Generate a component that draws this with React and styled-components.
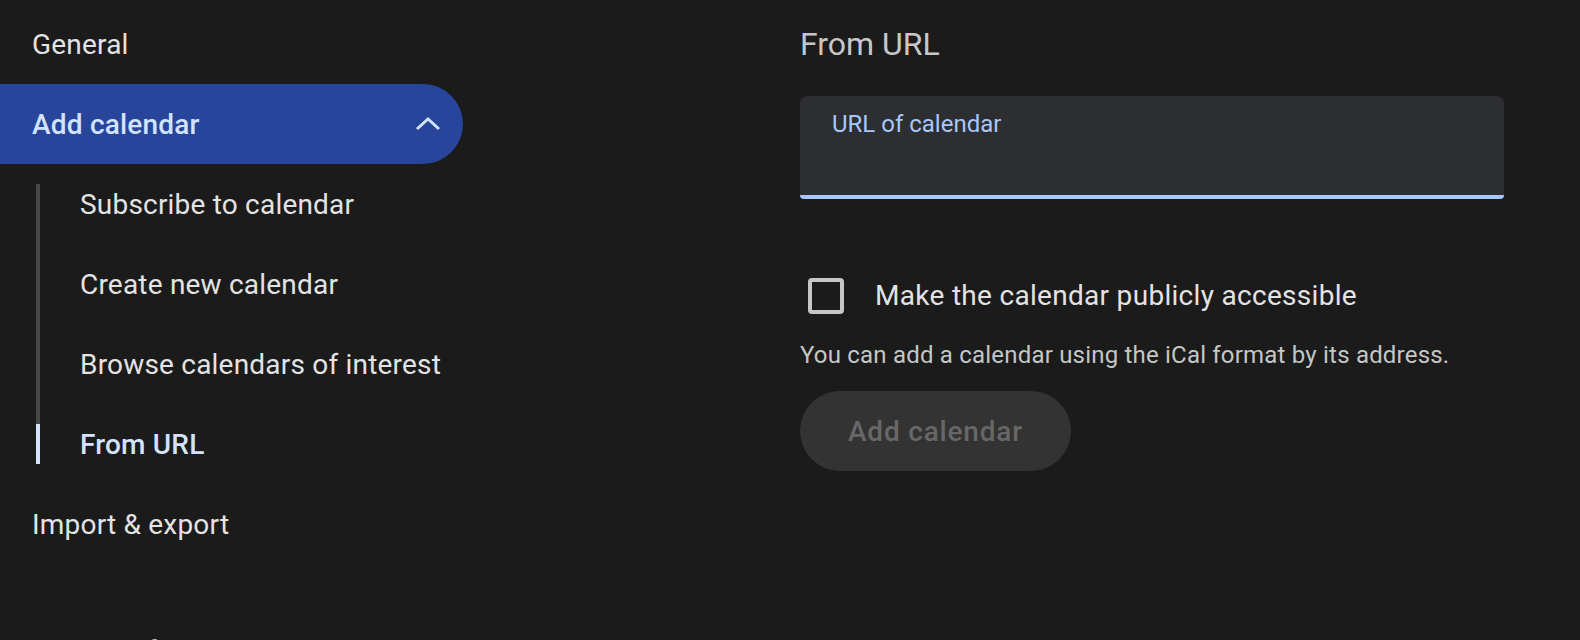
import styled, { createGlobalStyle } from "styled-components"

const GlobalStyle = createGlobalStyle`
  html, body {
    margin: 0;
    background: #1b1b1b;
    overflow: hidden;
  }
  body {
    font-family: Roboto, "Liberation Sans", sans-serif;
    -webkit-font-smoothing: antialiased;
  }
`

const subItems = [
    "Subscribe to calendar",
    "Create new calendar",
    "Browse calendars of interest",
    "From URL",
]

export default function App() {
    return (
        <>
        <GlobalStyle />
        <Page>
            <Nav>
                <NavItem>General</NavItem>
                <NavItem $open>
                    Add calendar
                    <Chevron viewBox="0 0 26 16">
                        <polyline points="2,13 13,3 24,13" />
                    </Chevron>
                </NavItem>
                <SubList>
                    {subItems.map((label) => (
                        <SubItem key={label} $active={label === "From URL"}>{label}</SubItem>
                    ))}
                </SubList>
                <NavItem>Import &amp; export</NavItem>
                <NavHeader>Settings for my calendars</NavHeader>
            </Nav>
            <Main>
                <Heading>From URL</Heading>
                <Field>
                    <FieldLabel>URL of calendar</FieldLabel>
                </Field>
                <CheckRow>
                    <Checkbox />
                    <CheckLabel>Make the calendar publicly accessible</CheckLabel>
                </CheckRow>
                <Helper>You can add a calendar using the iCal format by its address.</Helper>
                <AddButton disabled>Add calendar</AddButton>
            </Main>
        </Page>
        </>
    )
}

const Page = styled.div`
display: flex;
align-items: flex-start;
padding-top: 4px;
`;

const Nav = styled.nav`
width: 463px;
flex-shrink: 0;
display: flex;
flex-direction: column;
`;

const NavItem = styled.div`
height: 80px;
display: flex;
align-items: center;
justify-content: space-between;
padding: 0 22px 0 32px;
font-size: 28px;
letter-spacing: 0.2px;
color: ${(p) => (p.$open ? "#d3e3fd" : "#e3e3e3")};
font-weight: ${(p) => (p.$open ? 500 : 400)};
background: ${(p) => (p.$open ? "#26459b" : "transparent")};
border-radius: 0 40px 40px 0;
`;

const Chevron = styled.svg`
width: 26px;
height: 16px;
fill: none;
stroke: #d3e3fd;
stroke-width: 3;
`;

// grey rail down the left of the sub-menu
const SubList = styled.div`
position: relative;
display: flex;
flex-direction: column;
&::before {
    content: "";
    position: absolute;
    left: 36px;
    top: 20px;
    bottom: 20px;
    width: 4px;
    background: #444746;
}
`;

const SubItem = styled.div`
position: relative;
height: 80px;
display: flex;
align-items: center;
padding-left: 80px;
font-size: 28px;
letter-spacing: 0.2px;
color: ${(p) => (p.$active ? "#d3e3fd" : "#e3e3e3")};
font-weight: ${(p) => (p.$active ? 500 : 400)};
&::before {
    content: "";
    display: ${(p) => (p.$active ? "block" : "none")};
    position: absolute;
    left: 36px;
    top: 20px;
    width: 4px;
    height: 40px;
    background: #d3e3fd;
}
`;

const NavHeader = styled.div`
margin-top: 68px;
padding-left: 32px;
line-height: 40px;
font-size: 29px;
font-weight: 500;
color: #e3e3e3;
white-space: nowrap;
`;

const Main = styled.main`
margin-left: 337px;
width: 704px;
padding-top: 20px;
display: flex;
flex-direction: column;
align-items: flex-start;
`;

const Heading = styled.h1`
margin: 0;
font-size: 32px;
line-height: 40px;
font-weight: 400;
color: #c7c7c7;
`;

const Field = styled.div`
margin-top: 32px;
align-self: stretch;
height: 103px;
box-sizing: border-box;
padding: 16px 32px 0;
background: #2d2e31;
border-bottom: 4px solid #a8c7fa;
border-radius: 8px 8px 4px 4px;
`;

const FieldLabel = styled.div`
font-size: 24px;
line-height: 24px;
color: #a8c7fa;
`;

const CheckRow = styled.label`
margin-top: 79px;
margin-left: 8px;
display: flex;
align-items: center;
gap: 31px;
`;

const Checkbox = styled.span`
width: 36px;
height: 36px;
box-sizing: border-box;
border: 4px solid #c4c7c5;
border-radius: 4px;
`;

const CheckLabel = styled.span`
font-size: 28px;
line-height: 36px;
letter-spacing: 0.3px;
color: #e3e3e3;
`;

const Helper = styled.p`
margin: 25px 0 0;
font-size: 24px;
line-height: 32px;
letter-spacing: 0.2px;
color: #c4c7c5;
`;

const AddButton = styled.button`
margin-top: 20px;
height: 80px;
padding: 0 48px;
border: none;
border-radius: 40px;
background: #333333;
color: #676767;
font-family: inherit;
font-size: 28px;
font-weight: 500;
letter-spacing: 0.8px;
`;
